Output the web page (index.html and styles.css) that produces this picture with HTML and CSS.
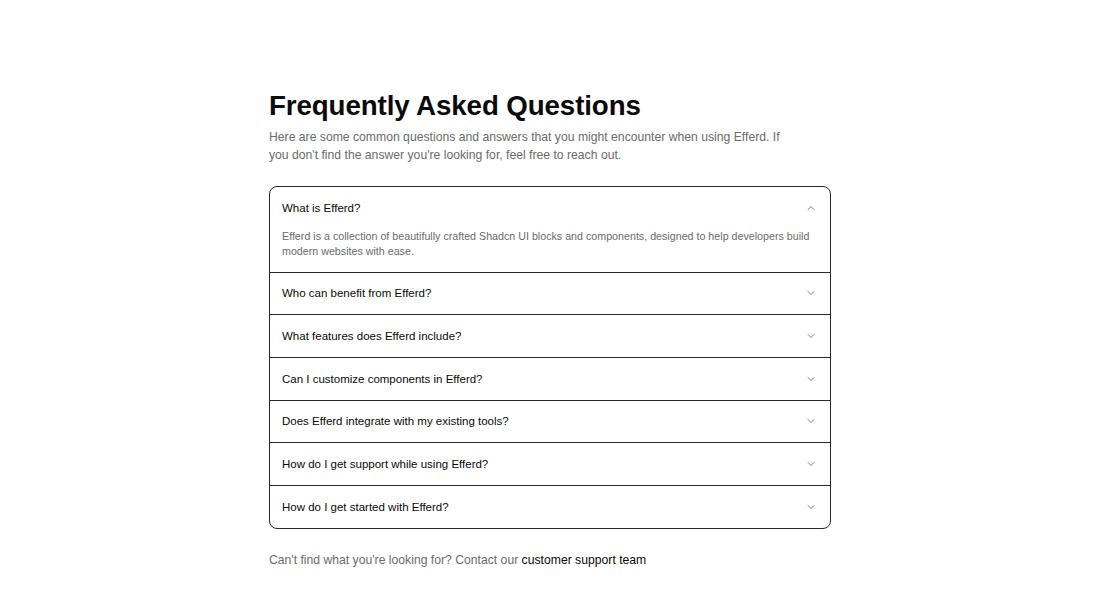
FILE: index.html
```html
<!DOCTYPE html>
<html lang="en">
<head>
<meta charset="utf-8">
<title>FAQ</title>
<link rel="stylesheet" href="styles.css">
</head>
<body>
<main class="faq">
  <h1 class="title">Frequently Asked Questions</h1>
  <p class="lead">Here are some common questions and answers that you might encounter when using Efferd. If you don't find the answer you're looking for, feel free to reach out.</p>
  <div class="accordion">
    <div class="item open">
      <div class="trigger"><span>What is Efferd?</span>
        <svg class="chev" viewBox="0 0 24 24" width="12" height="12"><path d="m18 15-6-6-6 6"/></svg>
      </div>
      <div class="content">Efferd is a collection of beautifully crafted Shadcn UI blocks and components, designed to help developers build modern websites with ease.</div>
    </div>
    <div class="item">
      <div class="trigger"><span>Who can benefit from Efferd?</span>
        <svg class="chev" viewBox="0 0 24 24" width="12" height="12"><path d="m6 9 6 6 6-6"/></svg>
      </div>
    </div>
    <div class="item">
      <div class="trigger"><span>What features does Efferd include?</span>
        <svg class="chev" viewBox="0 0 24 24" width="12" height="12"><path d="m6 9 6 6 6-6"/></svg>
      </div>
    </div>
    <div class="item">
      <div class="trigger"><span>Can I customize components in Efferd?</span>
        <svg class="chev" viewBox="0 0 24 24" width="12" height="12"><path d="m6 9 6 6 6-6"/></svg>
      </div>
    </div>
    <div class="item">
      <div class="trigger"><span>Does Efferd integrate with my existing tools?</span>
        <svg class="chev" viewBox="0 0 24 24" width="12" height="12"><path d="m6 9 6 6 6-6"/></svg>
      </div>
    </div>
    <div class="item">
      <div class="trigger"><span>How do I get support while using Efferd?</span>
        <svg class="chev" viewBox="0 0 24 24" width="12" height="12"><path d="m6 9 6 6 6-6"/></svg>
      </div>
    </div>
    <div class="item">
      <div class="trigger"><span>How do I get started with Efferd?</span>
        <svg class="chev" viewBox="0 0 24 24" width="12" height="12"><path d="m6 9 6 6 6-6"/></svg>
      </div>
    </div>
  </div>
  <p class="foot">Can't find what you're looking for? Contact our <a href="#" class="link">customer support team</a></p>
</main>
</body>
</html>
```
FILE: styles.css
```css
html, body {
  margin: 0;
  padding: 0;
  background: #ffffff;
}
body {
  font-family: "Liberation Sans", Arial, sans-serif;
  color: #0a0a0a;
}
.faq {
  width: 562px;
  margin: 0 auto;
  padding-top: 89px;
}
.title {
  margin: 0;
  font-size: 27.7px;
  line-height: 34px;
  font-weight: 700;
  letter-spacing: -0.1px;
}
.lead {
  margin: 5px 0 0;
  width: 522px;
  font-size: 12.2px;
  line-height: 18px;
  color: #6b6b6b;
}
.accordion {
  margin-top: 22px;
  border: 1px solid #2a2a2a;
  border-radius: 8px;
  overflow: hidden;
}
.item + .item {
  border-top: 1px solid #2a2a2a;
}
.trigger {
  display: flex;
  align-items: center;
  justify-content: space-between;
  height: 41.67px;
  padding: 0 13px 0 12px;
  font-size: 11.5px;
  color: #0a0a0a;
}
.chev {
  fill: none;
  stroke: #555;
  stroke-width: 1.5;
  stroke-linecap: round;
  stroke-linejoin: round;
}
.content {
  padding: 0 16px 13px 12px;
  font-size: 10.7px;
  line-height: 15px;
  color: #6b6b6b;
}
.foot {
  margin: 22px 0 0;
  font-size: 12.2px;
  line-height: 18px;
  color: #6b6b6b;
}
.link {
  color: #0a0a0a;
  text-decoration: none;
}
```
